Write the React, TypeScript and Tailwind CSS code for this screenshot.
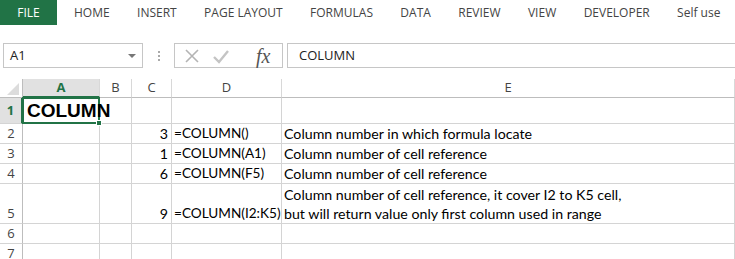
import React from 'react';

const tabs = ['HOME', 'INSERT', 'PAGE LAYOUT', 'FORMULAS', 'DATA', 'REVIEW', 'VIEW', 'DEVELOPER', 'Self use'];

const cols = ['A', 'B', 'C', 'D', 'E'];

type Row = { n: number; h: string; c?: string; d?: string; e?: string[] };

const rows: Row[] = [
  { n: 2, h: 'h-[20px]', c: '3', d: '=COLUMN()', e: ['Column number in which formula locate'] },
  { n: 3, h: 'h-[20px]', c: '1', d: '=COLUMN(A1)', e: ['Column number of cell reference'] },
  { n: 4, h: 'h-[20px]', c: '6', d: '=COLUMN(F5)', e: ['Column number of cell reference'] },
  {
    n: 5,
    h: 'h-[40px]',
    c: '9',
    d: '=COLUMN(I2:K5)',
    e: ['Column number of cell reference, it cover I2 to K5 cell,', 'but will return value only first column used in range'],
  },
  { n: 6, h: 'h-[20px]' },
  { n: 7, h: 'h-[20px]' },
];

const line = 'border-r border-b border-[#d4d4d4] whitespace-nowrap';
const cell = `${line} overflow-hidden`;

export default function App() {
  return (
    <div className="w-[735px] h-[259px] overflow-hidden bg-white font-['Lato',sans-serif] text-[14.2px] text-black">
      {/* ribbon tabs */}
      <div className="flex h-[25px] items-center font-['Open_Sans',sans-serif] text-[12px] text-[#444]">
        <div className="flex h-full w-[57px] items-center justify-center bg-[#217346] text-white">FILE</div>
        <div className="ml-[17px] flex gap-[27.4px]">
          {tabs.map((t) => (
            <span key={t}>{t}</span>
          ))}
        </div>
      </div>

      {/* formula bar */}
      <div className="mt-[18px] flex h-[25px] items-stretch">
        <div className="ml-[3px] flex w-[140px] items-center justify-between border border-[#c6c6c6] pl-[6px] pr-[6px] font-['Open_Sans',sans-serif] text-[13px] text-[#222]">
          <span>A1</span>
          <span className="h-0 w-0 border-x-[4px] border-t-[4px] border-x-transparent border-t-[#777]" />
        </div>
        <div className="flex w-[31px] flex-col items-center justify-center gap-[2px]">
          <span className="h-[2px] w-[2px] bg-[#aaa]" />
          <span className="h-[2px] w-[2px] bg-[#aaa]" />
          <span className="h-[2px] w-[2px] bg-[#aaa]" />
        </div>
        <div className="flex w-[109px] items-center border border-[#c6c6c6]">
          <svg width="16" height="16" viewBox="0 0 16 16" className="ml-[9px]">
            <path d="M2 2 L14 14 M14 2 L2 14" stroke="#b4b4b4" strokeWidth="1.6" fill="none" />
          </svg>
          <svg width="18" height="16" viewBox="0 0 18 16" className="ml-[12px]">
            <path d="M2 9 L7 14 L16 3" stroke="#c4c4c4" strokeWidth="2.4" fill="none" />
          </svg>
          <span className="ml-[26px] font-['Liberation_Serif',serif] text-[20px] italic leading-none text-[#555]">
            fx
          </span>
        </div>
        <div className="ml-[4px] flex flex-1 items-center border border-r-0 border-[#c6c6c6] pl-[11px] font-['Open_Sans',sans-serif] text-[13px] text-[#222]">
          COLUMN
        </div>
      </div>

      {/* grid */}
      <div className="mt-[11px] grid grid-cols-[23px_77px_32px_40px_110px_1fr]">
        {/* header row */}
        <div className="relative h-[19px] border-r border-b border-[#bdbdbd] bg-white">
          <span className="absolute bottom-[2px] right-[3px] h-0 w-0 border-b-[12px] border-l-[12px] border-b-[#dcdcdc] border-l-transparent" />
        </div>
        {cols.map((c) => (
          <div
            key={c}
            className={`flex h-[19px] items-center justify-center border-r border-[#d8d8d8] font-['Open_Sans',sans-serif] text-[13px] ${
              c === 'A'
                ? 'border-b-2 border-b-[#217346] bg-[#e1e1e1] font-bold text-[#217346]'
                : 'border-b border-b-[#bdbdbd] text-[#444]'
            }`}
          >
            {c}
          </div>
        ))}

        {/* row 1 */}
        <div className="flex h-[26px] items-center justify-center border-r-2 border-b border-r-[#217346] border-b-[#d4d4d4] bg-[#e1e1e1] font-['Open_Sans',sans-serif] text-[13px] font-bold text-[#217346]">
          1
        </div>
        <div className="relative h-[26px] border-r border-b border-[#d4d4d4]">
          <div className="absolute -left-[1px] -top-[1px] h-[27px] w-[78px] border-2 border-[#217346]" />
          <span className="absolute -bottom-[3px] -right-[3px] h-[6px] w-[6px] border border-white bg-[#217346]" />
          <span className="absolute left-[4px] top-[3px] z-10 font-['Liberation_Sans',sans-serif] text-[19px] font-bold leading-[20px]">
            COLUMN
          </span>
        </div>
        <div className={`h-[26px] ${cell}`} />
        <div className={`h-[26px] ${cell}`} />
        <div className={`h-[26px] ${cell}`} />
        <div className={`h-[26px] ${cell}`} />

        {rows.map((r) => (
          <React.Fragment key={r.n}>
            <div
              className={`flex ${r.h} items-end justify-center border-r border-b border-r-[#bdbdbd] border-b-[#d4d4d4] font-['Open_Sans',sans-serif] text-[13px] leading-[19px] text-[#444]`}
            >
              {r.n}
            </div>
            <div className={`${r.h} ${cell}`} />
            <div className={`${r.h} ${cell}`} />
            <div className={`flex ${r.h} items-end justify-end pr-[3px] leading-[19px] ${cell}`}>{r.c}</div>
            <div className={`flex ${r.h} items-end pl-[2px] text-[13.6px] leading-[19px] ${line}`}>{r.d}</div>
            <div className={`flex ${r.h} flex-col justify-end pl-[2px] leading-[19px] ${cell}`}>
              {r.e?.map((l) => <span key={l}>{l}</span>)}
            </div>
          </React.Fragment>
        ))}
      </div>
    </div>
  );
}
